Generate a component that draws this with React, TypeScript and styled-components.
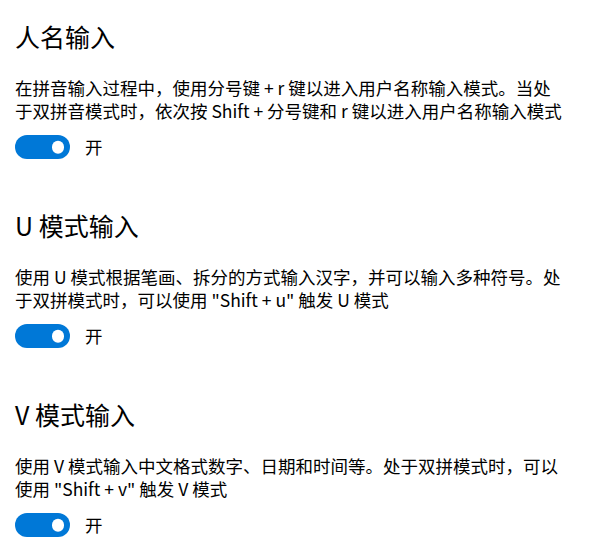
import React, { useState } from 'react';
import styled, { createGlobalStyle } from 'styled-components';

const GlobalStyle = createGlobalStyle`
  html, body {
    margin: 0;
    padding: 0;
    background: #ffffff;
  }
  body {
    font-family: "Noto Sans CJK SC", "Noto Sans", sans-serif;
    color: #000000;
  }
`;

const Page = styled.div`
  display: flex;
  flex-direction: column;
  gap: 49px;
  padding: 19px 15px 0 15px;
`;

const Section = styled.section`
  display: flex;
  flex-direction: column;
`;

const Title = styled.h2`
  margin: 0;
  font-size: 25px;
  line-height: 34px;
  font-weight: 400;
  color: #000;
`;

const Description = styled.p`
  margin: 23px 0 0 0;
  font-size: 17.5px;
  line-height: 23px;
  white-space: nowrap;
  color: #000;
`;

const ToggleRow = styled.label`
  display: flex;
  align-items: center;
  gap: 15px;
  margin-top: 13px;
  cursor: pointer;
  font-size: 17.5px;
  line-height: 24px;
`;

const Track = styled.span<{ $on: boolean }>`
  position: relative;
  display: inline-block;
  width: 55px;
  height: 24px;
  box-sizing: border-box;
  border-radius: 12px;
  background: ${(p) => (p.$on ? '#0078d7' : '#ffffff')};
  border: ${(p) => (p.$on ? 'none' : '2px solid #333')};
  flex-shrink: 0;
`;

const Knob = styled.span<{ $on: boolean }>`
  position: absolute;
  top: 50%;
  width: 12.5px;
  height: 12.5px;
  border-radius: 50%;
  transform: translateY(-50%);
  background: ${(p) => (p.$on ? '#ffffff' : '#333')};
  ${(p) => (p.$on ? 'right: 6px;' : 'left: 5px;')}
`;

const StateText = styled.span`
  color: #000;
`;

type Item = {
  key: string;
  title: string;
  lines: string[];
};

const items: Item[] = [
  {
    key: 'name',
    title: '人名输入',
    lines: [
      '在拼音输入过程中，使用分号键 + r 键以进入用户名称输入模式。当处',
      '于双拼音模式时，依次按 Shift + 分号键和 r 键以进入用户名称输入模式',
    ],
  },
  {
    key: 'u',
    title: 'U 模式输入',
    lines: [
      '使用 U 模式根据笔画、拆分的方式输入汉字，并可以输入多种符号。处',
      '于双拼模式时，可以使用 "Shift + u" 触发 U 模式',
    ],
  },
  {
    key: 'v',
    title: 'V 模式输入',
    lines: [
      '使用 V 模式输入中文格式数字、日期和时间等。处于双拼模式时，可以',
      '使用 "Shift + v" 触发 V 模式',
    ],
  },
];

const Toggle = ({ on, onChange }: { on: boolean; onChange: () => void }) => (
  <ToggleRow onClick={onChange}>
    <Track $on={on}>
      <Knob $on={on} />
    </Track>
    <StateText>{on ? '开' : '关'}</StateText>
  </ToggleRow>
);

const App = () => {
  const [state, setState] = useState<Record<string, boolean>>({ name: true, u: true, v: true });

  return (
    <>
      <GlobalStyle />
      <Page>
        {items.map((item) => (
          <Section key={item.key}>
            <Title>{item.title}</Title>
            <Description>
              {item.lines.map((line, i) => (
                <React.Fragment key={i}>
                  {line}
                  {i < item.lines.length - 1 && <br />}
                </React.Fragment>
              ))}
            </Description>
            <Toggle
              on={state[item.key]}
              onChange={() => setState((s) => ({ ...s, [item.key]: !s[item.key] }))}
            />
          </Section>
        ))}
      </Page>
    </>
  );
};

export default App;
